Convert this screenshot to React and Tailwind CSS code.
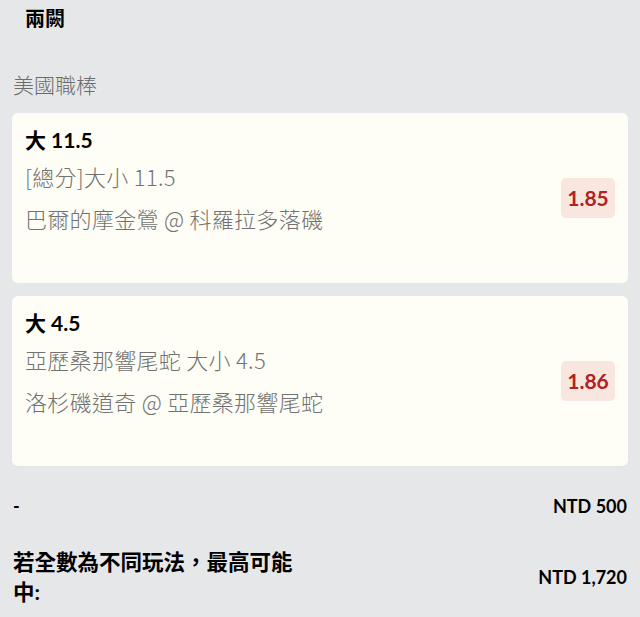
import React from "react";

const latin = "font-['Lato','Noto_Sans_CJK_TC',sans-serif]";
const cjk = "font-['Noto_Sans_CJK_TC','Noto_Sans',sans-serif]";

const bets = [
  {
    pick: "大 11.5",
    market: "[總分]大小 11.5",
    match: "巴爾的摩金鶯 @ 科羅拉多落磯",
    odds: "1.85",
  },
  {
    pick: "大 4.5",
    market: "亞歷桑那響尾蛇 大小 4.5",
    match: "洛杉磯道奇 @ 亞歷桑那響尾蛇",
    odds: "1.86",
  },
];

function BetCard({ bet }) {
  return (
    <div className="h-[170px] bg-[#fefef6] rounded-[6px] pl-[13px] pr-[13px] flex items-center justify-between">
      <div className="self-start pt-[12px]">
        <div className={`${latin} text-[21px] leading-[30px] font-bold text-black`}>{bet.pick}</div>
        <div className={`${cjk} mt-[6px] text-[22px] leading-[30px] tracking-[0.3px] font-light text-[#727272]`}>{bet.market}</div>
        <div className={`${cjk} mt-[12px] text-[22px] leading-[30px] tracking-[0.3px] font-light text-[#727272]`}>{bet.match}</div>
      </div>
      <div className={`${latin} h-[40px] w-[54px] rounded-[5px] bg-[#f8e6df] flex items-center justify-center text-[21px] font-bold text-[#b1231f]`}>
        {bet.odds}
      </div>
    </div>
  );
}

export default function App() {
  return (
    <div className="w-[640px] h-[617px] bg-[#e6e7e9] overflow-hidden">
      <div className={`${cjk} px-[25px] pt-[3px] text-[20px] leading-[30px] font-bold text-black`}>兩闕</div>

      <div className="px-[12px]">
        <div className={`${cjk} mt-[36px] pl-[1px] text-[21px] leading-[30px] font-light text-[#6b6b6b]`}>美國職棒</div>

        <div className="mt-[14px] flex flex-col gap-[13px]">
          {bets.map((b) => (
            <BetCard key={b.odds} bet={b} />
          ))}
        </div>

        <div className={`${latin} mt-[25px] pl-[1px] flex items-center justify-between text-[18px] leading-[30px] font-bold text-black`}>
          <span>-</span>
          <span className="pr-[1px]">NTD 500</span>
        </div>

        <div className={`${latin} mt-[26px] pl-[1px] flex items-center justify-between font-bold text-black`}>
          <div className="max-w-[295px] text-[21.5px] leading-[30px]">若全數為不同玩法，最高可能中:</div>
          <span className="pr-[1px] text-[18px] leading-[30px]">NTD 1,720</span>
        </div>
      </div>
    </div>
  );
}
